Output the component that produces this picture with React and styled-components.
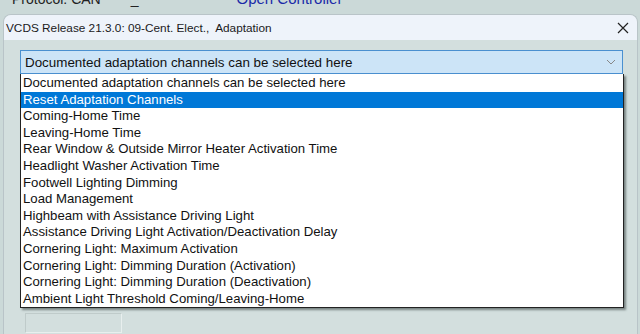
import React from 'react';
import styled, { createGlobalStyle } from 'styled-components';

const GlobalStyle = createGlobalStyle`
  html, body {
    margin: 0;
    padding: 0;
    background: #cbd9d8;
    overflow: hidden;
  }
  #root {
    width: 640px;
    height: 334px;
    overflow: hidden;
  }
`;

const Page = styled.div`
  width: 640px;
  height: 334px;
  background: #cbd9d8;
  display: flex;
  flex-direction: column;
  overflow: hidden;
`;

const BackStrip = styled.div`
  height: 14px;
  flex: none;
  overflow: hidden;
  display: flex;
  align-items: flex-end;
  font-family: 'Liberation Sans', Arial, sans-serif;
  font-size: 14px;
  line-height: 14px;

  span {
    margin-bottom: 8px;
    color: #222;
  }
  .proto {
    margin-left: 12px;
  }
  .dash {
    margin-left: 30px;
  }
  .open {
    margin-left: 98px;
    color: #1a2aa8;
    font-size: 15px;
  }
`;

const Window = styled.div`
  flex: 1;
  margin-left: 3px;
  margin-right: 2px;
  border: 1px solid #b9c4c8;
  border-bottom: none;
  border-radius: 8px 8px 0 0;
  background: #d3dfde;
  display: flex;
  flex-direction: column;
  overflow: hidden;
`;

const TitleBar = styled.div`
  height: 25px;
  flex: none;
  background: #eef3fa;
  display: flex;
  align-items: center;
  justify-content: space-between;
  padding: 0 8px 0 2px;
  font-family: 'Liberation Sans', Arial, sans-serif;
  font-size: 11.8px;
  color: #1a1a1a;
  white-space: pre;
`;

const Close = styled.svg`
  width: 12px;
  height: 12px;
`;

const Body = styled.div`
  padding: 10px 0 0 16px;
  display: flex;
  flex-direction: column;
  align-items: flex-start;
`;

const Combo = styled.div`
  width: 603px;
  height: 24px;
  box-sizing: border-box;
  border: 1px solid #4a90d0;
  background: #cce4f7;
  display: flex;
  align-items: center;
  justify-content: space-between;
  padding: 0 6px 0 4px;
  font-family: 'Liberation Sans', Arial, sans-serif;
  font-size: 13.4px;
  color: #111;
`;

const Chevron = styled.svg`
  width: 10px;
  height: 6px;
`;

const List = styled.ul`
  list-style: none;
  margin: 0;
  padding: 1px 0 0;
  width: 604px;
  box-sizing: border-box;
  background: #fff;
  border: 1px solid #222;
  border-top: none;
  box-shadow: 2px 2px 2px rgba(60, 70, 70, 0.6);
  font-family: 'Liberation Sans', Arial, sans-serif;
  font-size: 13.2px;
  color: #111;
`;

const Item = styled.li`
  height: 16.6px;
  line-height: 16.6px;
  padding-left: 2px;
  white-space: nowrap;
  background: ${(p) => (p.selected ? '#0078d7' : 'transparent')};
  color: ${(p) => (p.selected ? '#fff' : '#111')};
`;

const SmallBox = styled.div`
  width: 97px;
  height: 20px;
  margin: 5px 0 0 5px;
  box-sizing: border-box;
  border: 1px solid #e8efee;
  border-top-color: #bfcbca;
  border-left-color: #bfcbca;
`;

const items = [
  'Documented adaptation channels can be selected here',
  'Reset Adaptation Channels',
  'Coming-Home Time',
  'Leaving-Home Time',
  'Rear Window & Outside Mirror Heater Activation Time',
  'Headlight Washer Activation Time',
  'Footwell Lighting Dimming',
  'Load Management',
  'Highbeam with Assistance Driving Light',
  'Assistance Driving Light Activation/Deactivation Delay',
  'Cornering Light: Maximum Activation',
  'Cornering Light: Dimming Duration (Activation)',
  'Cornering Light: Dimming Duration (Deactivation)',
  'Ambient Light Threshold Coming/Leaving-Home',
];

const App = () => {
  return (
    <Page>
      <GlobalStyle />
      <BackStrip>
        <span className='proto'>Protocol: CAN</span>
        <span className='dash'>_</span>
        <span className='open'>Open Controller</span>
      </BackStrip>
      <Window>
        <TitleBar>
          <span>VCDS Release 21.3.0: 09-Cent. Elect.,  Adaptation</span>
          <Close viewBox='0 0 12 12'>
            <path d='M1 1 L11 11 M11 1 L1 11' stroke='#222' strokeWidth='1.2' fill='none' />
          </Close>
        </TitleBar>
        <Body>
          <Combo>
            <span>{items[0]}</span>
            <Chevron viewBox='0 0 10 6'>
              <path d='M1 1 L5 5 L9 1' stroke='#888' strokeWidth='1' fill='none' />
            </Chevron>
          </Combo>
          <List>
            {items.map((label, i) => (
              <Item key={i} selected={i === 1}>
                {label}
              </Item>
            ))}
          </List>
          <SmallBox />
        </Body>
      </Window>
    </Page>
  );
};

export default App;
